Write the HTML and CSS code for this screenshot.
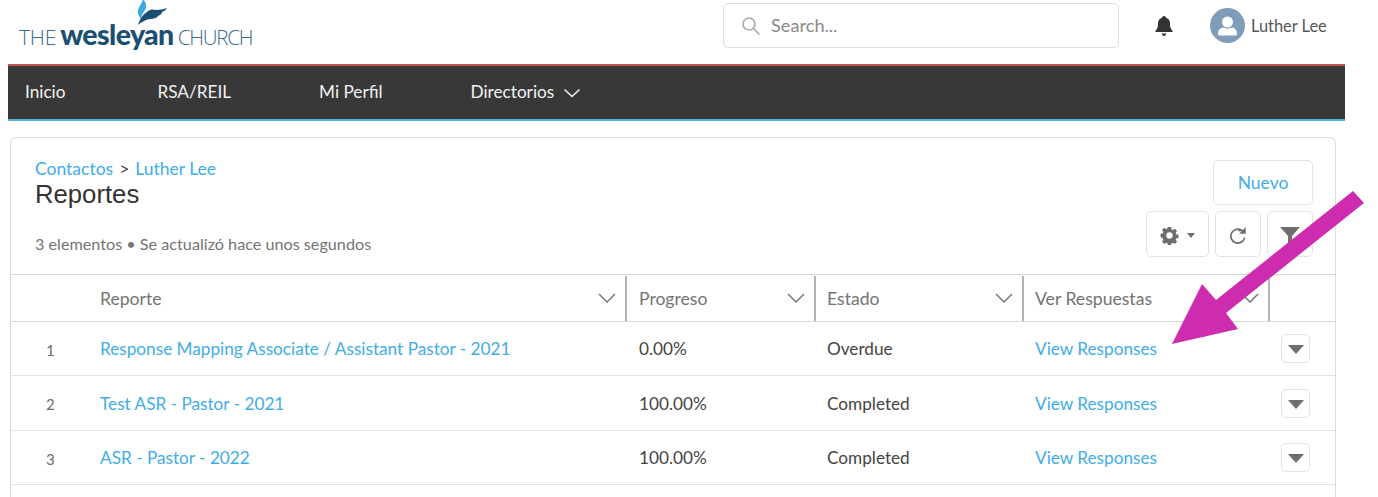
FILE: index.html
```html
<!DOCTYPE html>
<html lang="es">
<head>
    <meta charset="UTF-8">
    <title>Reportes</title>
    <link rel="stylesheet" href="styles.css">
</head>
<body>
    <header class="topbar">
        <a class="logo">
            <svg class="logo-mark" width="36" height="28" viewBox="0 0 36 28">
                <path fill="#3fa9e0" d="M8 0c2 3 4 5 3 9-1 3-4 5-5 11-2-3-4-6-3-9 1-4 4-6 5-11z"/>
                <path fill="#1b4f72" d="M3 26c2-7 6-12 12-15 3-1 5 0 7 0 3 0 7-1 10-2-1 2-3 3-5 4 0 2-2 3-4 4-1 2-4 2-6 3-4 0-8 1-14 6z"/>
            </svg>
            <span class="logo-the">THE</span><span class="logo-bold">wesleyan</span><span class="logo-church">CHURCH</span>
        </a>
        <div class="search">
            <svg width="20" height="20" viewBox="0 0 20 20" fill="none" stroke="#a8a8a8" stroke-width="1.6">
                <circle cx="8" cy="8" r="6"/>
                <path d="M12.5 12.5l6 6"/>
            </svg>
            <span>Search...</span>
        </div>
        <svg class="bell" width="20" height="22" viewBox="0 0 20 22">
            <path fill="#333" d="M10 1c1 0 2 .8 2 1.800 3 .8 4 3.200 4 6.200 0 3 .6 5 2.400 6.600.5.500.2 1.400-.6 1.400H2.200c-.8 0-1.100-.9-.6-1.400C3.400 14 4 12 4 9c0-3 1-5.400 4-6.200C8 1.800 9 1 10 1z"/>
            <path fill="#333" d="M7.800 18.500h4.400C12 20 11 21 10 21s-2-1-2.200-2.500z"/>
        </svg>
        <div class="user">
            <svg width="35" height="35" viewBox="0 0 35 35">
                <circle cx="17.500" cy="17.500" r="17.500" fill="#7f9db9"/>
                <circle cx="17.500" cy="14" r="5.500" fill="#fff"/>
                <path fill="#fff" d="M8 26c0-4 2-6 5-6.500 3 1.500 6 1.500 9 0 3 .5 5 2.500 5 6.500 0 1-1 1.500-2 1.500H10c-1 0-2-.5-2-1.500z"/>
            </svg>
            <span>Luther Lee</span>
        </div>
    </header>

    <nav class="mainnav">
        <a>Inicio</a>
        <a>RSA/REIL</a>
        <a>Mi Perfil</a>
        <a>Directorios
            <svg width="18" height="10" viewBox="0 0 18 10" fill="none" stroke="#f2f2f2" stroke-width="1.600"><path d="M1.500 1.500L9 8.500l7.500-7"/></svg>
        </a>
    </nav>

    <main class="card">
        <div class="card-head">
            <div class="titles">
                <div class="crumbs"><a>Contactos</a> <span>&gt;</span> <a>Luther Lee</a></div>
                <h1>Reportes</h1>
                <p class="meta">3 elementos • Se actualizó hace unos segundos</p>
            </div>
            <div class="actions">
                <button class="btn-new">Nuevo</button>
                <div class="tools">
                    <button class="tool tool-wide">
                        <svg width="19" height="19" viewBox="0 0 18 18">
                            <path fill="#706e6b" fill-rule="evenodd" d="M7.500 1h3l.4 2.200 1.300.6 1.900-1.200 2 2.100-1.200 1.800.5 1.400 2.100.5v2.900l-2.100.5-.5 1.300 1.200 1.900-2 2-1.900-1.200-1.300.6-.4 2.100h-3l-.4-2.100-1.300-.6-1.900 1.200-2-2 1.200-1.900-.5-1.300L.5 10.300V7.400l2.100-.5.5-1.400-1.200-1.800 2-2.100 1.900 1.200 1.300-.6zM9 6a3 3 0 1 0 0 6 3 3 0 0 0 0-6z"/>
                        </svg>
                        <i class="caret"></i>
                    </button>
                    <button class="tool">
                        <svg width="20" height="20" viewBox="0 0 18 18" fill="none" stroke="#706e6b" stroke-width="1.500">
                            <path d="M15 10.500a6.300 6.300 0 1 1-2.500-6.500H9"/>
                            <path fill="#706e6b" stroke="none" d="M16 1v6h-6z"/>
                        </svg>
                    </button>
                    <button class="tool">
                        <svg width="20" height="20" viewBox="0 0 20 20"><path fill="#706e6b" d="M0 1h20l-8 9v9H8v-9z"/></svg>
                    </button>
                </div>
            </div>
        </div>

        <table>
            <thead>
                <tr>
                    <th class="col-num"></th>
                    <th class="col-report"><div>Reporte <svg class="chev" width="18" height="10" viewBox="0 0 18 10"><path d="M1 1l8 8 8-8"/></svg></div></th>
                    <th class="col-progress"><div>Progreso <svg class="chev" width="18" height="10" viewBox="0 0 18 10"><path d="M1 1l8 8 8-8"/></svg></div></th>
                    <th class="col-state"><div>Estado <svg class="chev" width="18" height="10" viewBox="0 0 18 10"><path d="M1 1l8 8 8-8"/></svg></div></th>
                    <th class="col-view"><div>Ver Respuestas <svg class="chev" width="18" height="10" viewBox="0 0 18 10"><path d="M1 1l8 8 8-8"/></svg></div></th>
                    <th class="col-menu"></th>
                </tr>
            </thead>
            <tbody>
                <tr>
                    <td class="num">1</td>
                    <td><a>Response Mapping Associate / Assistant Pastor - 2021</a></td>
                    <td>0.00%</td>
                    <td>Overdue</td>
                    <td><a>View Responses</a></td>
                    <td><button class="row-menu"><i></i></button></td>
                </tr>
                <tr>
                    <td class="num">2</td>
                    <td><a>Test ASR - Pastor - 2021</a></td>
                    <td>100.00%</td>
                    <td>Completed</td>
                    <td><a>View Responses</a></td>
                    <td><button class="row-menu"><i></i></button></td>
                </tr>
                <tr>
                    <td class="num">3</td>
                    <td><a>ASR - Pastor - 2022</a></td>
                    <td>100.00%</td>
                    <td>Completed</td>
                    <td><a>View Responses</a></td>
                    <td><button class="row-menu"><i></i></button></td>
                </tr>
            </tbody>
        </table>
    </main>

    <svg class="callout" width="1378" height="497" viewBox="0 0 1378 497">
        <polygon fill="#cd2cae" points="1353,191 1364,203 1226,313 1238,329 1172,344 1202,284 1216,300"/>
    </svg>
</body>
</html>
```

FILE: styles.css
```css
* {
    box-sizing: border-box;
}

html, body {
    height: 100%;
}

body {
    margin: 0;
    position: relative;
    overflow: hidden;
    background: #fff;
    font-family: Lato, "Open Sans", sans-serif;
    font-size: 17.2px;
    color: #444;
}

.card a {
    color: #3fade8;
}

button {
    font-family: inherit;
    background: #fff;
    border: 1.5px solid #e3e3e3;
    border-radius: 5px;
    cursor: pointer;
}

.topbar {
    display: flex;
    align-items: center;
    height: 64px;
    padding-left: 19px;
}

.logo {
    display: flex;
    align-items: baseline;
    position: relative;
    width: 704px;
    padding-top: 3px;
    color: #1b4f72;
}

.logo-mark {
    position: absolute;
    left: 116px;
    top: -15px;
}

.logo-the, .logo-church {
    font-family: "Open Sans", sans-serif;
    font-weight: 300;
    font-size: 21px;
    color: #3a6a8c;
}

.logo-the {
    letter-spacing: -0.2px;
}

.logo-church {
    font-size: 20.500px;
    letter-spacing: -1.2px;
}

.logo-bold {
    font-weight: 900;
    font-size: 28.500px;
    letter-spacing: -0.6px;
    margin: 0 4px 0 4px;
}

.search {
    display: flex;
    align-items: center;
    gap: 10px;
    width: 396px;
    height: 45px;
    margin-top: -13px;
    padding-left: 17px;
    border: 1.5px solid #dedede;
    border-radius: 5px;
    color: #8a8a8a;
    font-size: 18.2px;
}

.search span {
    margin-top: -2px;
}

.bell {
    margin: -12px 0 0 35px;
}

.user {
    display: flex;
    align-items: center;
    gap: 6px;
    margin: -13px 0 0 36px;
    color: #555;
    font-size: 16.4px;
}

.mainnav {
    display: flex;
    align-items: center;
    gap: 88px;
    width: 1337px;
    height: 57px;
    margin-left: 8px;
    padding: 0 0 2px 17px;
    background: #383838;
    border-top: 2px solid #c0524f;
    border-bottom: 2px solid #4fb3dc;
    color: #f2f2f2;
    font-size: 17.200px;
}

.mainnav a:first-child {
    margin-right: 4px;
}

.mainnav svg {
    margin-left: 4px;
}

.card {
    width: 1326px;
    height: 360px;
    margin: 16px 0 0 10px;
    border: 1.5px solid #dcdcdc;
    border-bottom: 0;
    border-radius: 6px 6px 0 0;
}

.card-head {
    display: flex;
    justify-content: space-between;
    height: 136px;
    padding: 20px 22px 0 24px;
}

.crumbs {
    font-size: 17.500px;
    line-height: 21px;
}

.crumbs span {
    margin: 0 1.5px;
}

h1 {
    margin: 1px 0 0;
    font-family: "Liberation Sans", sans-serif;
    font-weight: 400;
    font-size: 25.700px;
    line-height: 28px;
    color: #333;
}

.meta {
    margin: 26px 0 0;
    font-size: 16.200px;
    color: #747474;
}

.actions {
    display: flex;
    flex-direction: column;
    align-items: flex-end;
    gap: 6px;
    padding-top: 2px;
}

.btn-new {
    width: 100px;
    height: 45px;
    color: #3fade8;
    font-size: 17.500px;
}

.tools {
    display: flex;
    gap: 6px;
}

.tool {
    display: flex;
    align-items: center;
    justify-content: center;
    gap: 8px;
    width: 46px;
    height: 46px;
    padding: 3px 0 0;
}

.tool-wide {
    width: 63px;
}

.caret {
    border: 4px solid transparent;
    border-top: 5px solid #706e6b;
    border-bottom: 0;
}

table {
    width: 100%;
    table-layout: fixed;
    border-collapse: collapse;
}

th {
    height: 47px;
    padding: 0;
    border-top: 1.5px solid #d8d8d8;
    border-bottom: 1.5px solid #d8d8d8;
    font-weight: 400;
    font-size: 17.600px;
    text-align: left;
    color: #747474;
}

th div {
    display: flex;
    align-items: center;
    justify-content: space-between;
    height: 45px;
    padding: 0 9px 0 12px;
    border-right: 2px solid #b4b4b4;
}

th.col-state div, th.col-view div {
    padding-left: 11px;
}

.col-num { width: 77px; }
.col-report { width: 539px; }
.col-progress { width: 189px; }
.col-state { width: 208px; }
.col-view { width: 246px; }

.chev {
    fill: none;
    stroke: #777;
    stroke-width: 1.500;
}

td {
    height: 54px;
    padding: 0 12px;
    border-bottom: 1.5px solid #e2e2e2;
}

tr:nth-child(2) td {
    height: 55px;
}

td:nth-child(4), td:nth-child(5) {
    padding-left: 11px;
}

td.num {
    padding: 2px 0 0 35px;
    font-size: 15px;
    color: #6b6b6b;
}

.row-menu {
    display: flex;
    align-items: center;
    justify-content: center;
    width: 29px;
    height: 29px;
    margin-left: -1px;
    padding: 0;
}

.row-menu i {
    border: 8px solid transparent;
    border-top: 9px solid #706e6b;
    border-bottom: 0;
    margin-top: 2px;
}

.callout {
    position: absolute;
    left: 0;
    top: 0;
    pointer-events: none;
}
```
